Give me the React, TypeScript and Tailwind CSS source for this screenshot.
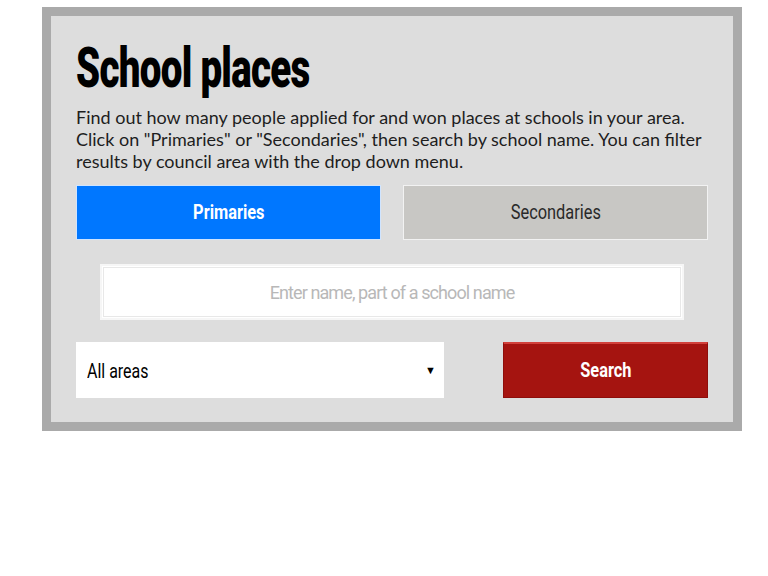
import { useState, type ReactNode } from "react";

const roboto = { fontFamily: "Roboto, 'Liberation Sans', sans-serif" };

// squeezed label, stands in for the narrow web font of the original
function Narrow({ children }: { children: ReactNode }) {
  return <span className="inline-block scale-x-[0.78]">{children}</span>;
}

export default function App() {
  const [tab, setTab] = useState<"primary" | "secondary">("primary");
  const [query, setQuery] = useState("");
  const [area, setArea] = useState("all");

  const tabClass = (active: boolean) =>
    `h-[55px] border text-[21px] ${
      active
        ? "border-[#cfe4ff] bg-[#0077ff] font-bold text-white"
        : "border-[#f2f2f2] bg-[#c8c7c4] text-[#2a2a2a]"
    }`;

  return (
    <div className="min-h-screen bg-white pt-[7px] pl-[42px]" style={roboto}>
      <div className="w-[700px] border-[9px] border-[#aaaaaa] bg-[#dddddd] px-[25px] pt-[25px] pb-[24px]">
        <h1 className="h-[55px] text-[55px] font-black leading-none tracking-[-1px] text-black">
          <span className="inline-block origin-left scale-x-[0.7]">School places</span>
        </h1>

        <p
          className="mt-[10px] text-[18px] leading-[22px] text-[#1e1e1e]"
          style={{ fontFamily: "Lato, sans-serif" }}
        >
          Find out how many people applied for and won places at schools in your area.
          <br />
          Click on "Primaries" or "Secondaries", then search by school name. You can filter
          <br />
          results by council area with the drop down menu.
        </p>

        {/* Tabs */}
        <div className="mt-[13px] grid grid-cols-2 gap-[22px]">
          <button onClick={() => setTab("primary")} className={tabClass(tab === "primary")}>
            <Narrow>Primaries</Narrow>
          </button>
          <button onClick={() => setTab("secondary")} className={tabClass(tab === "secondary")}>
            <Narrow>Secondaries</Narrow>
          </button>
        </div>

        {/* Search box */}
        <div className="mx-[24px] mt-[24px] border-2 border-[#f6f6f6] bg-white p-px">
          <input
            value={query}
            onChange={(e) => setQuery(e.target.value)}
            placeholder="Enter name, part of a school name"
            className="h-[50px] w-full border border-[#e8e8e8] bg-white text-center text-[18px] tracking-[-0.9px] text-black outline-none placeholder:text-[#b8b8b8]"
          />
        </div>

        {/* Area + search */}
        <div className="mt-[22px] flex items-center justify-between">
          <div className="relative h-[56px] w-[368px] bg-white">
            <select
              value={area}
              onChange={(e) => setArea(e.target.value)}
              className="absolute inset-0 appearance-none bg-transparent text-transparent outline-none"
            >
              <option value="all">All areas</option>
            </select>
            <div className="pointer-events-none flex h-full items-center justify-between pt-[3px] pr-[8px] pl-[11px] text-[21px] text-black">
              <span className="inline-block origin-left scale-x-[0.76]">All areas</span>
              <span className="text-[11px]">▼</span>
            </div>
          </div>
          <button className="h-[56px] w-[205px] border border-t-2 border-[#8e0e0b] border-t-[#d2403b] bg-[#a51410] text-[21px] font-bold text-white">
            <Narrow>Search</Narrow>
          </button>
        </div>
      </div>
    </div>
  );
}
